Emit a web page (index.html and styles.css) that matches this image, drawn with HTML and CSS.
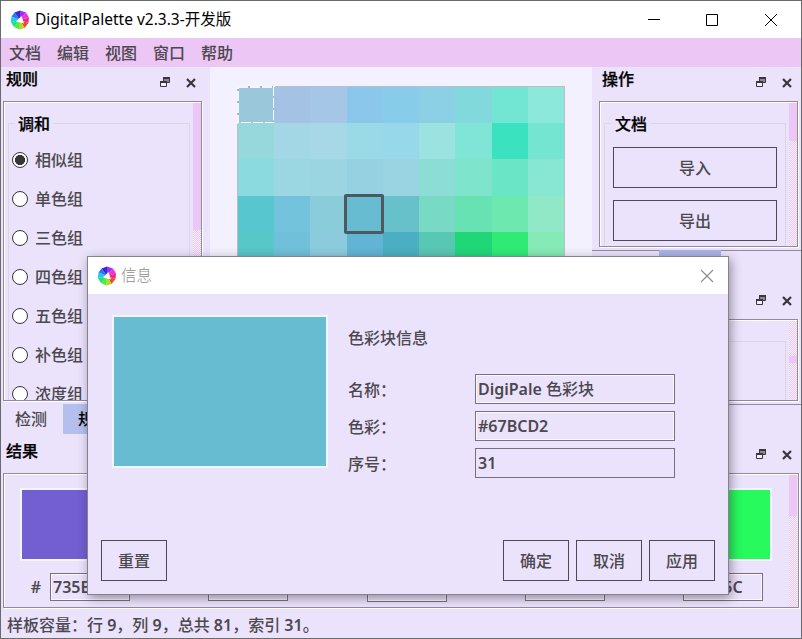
FILE: index.html
```html
<!DOCTYPE html>
<html lang="zh-CN">
<head>
<meta charset="utf-8">
<title>DigitalPalette v2.3.3</title>
<link rel="stylesheet" href="styles.css">
</head>
<body>
<svg width="0" height="0" class="defs">
  <symbol id="logo" viewBox="0 0 20 20">
    <path fill="#a030f0" d="M10 10 10 .5 16 2.500z"/>
    <path fill="#f030e0" d="M10 10 16 2.500 19 7.500z"/>
    <path fill="#f02878" d="M10 10 19 7.500 18.500 13z"/>
    <path fill="#f04830" d="M10 10 18.500 13 14.500 18z"/>
    <path fill="#b8d820" d="M10 10 14.500 18 9.500 19.500z"/>
    <path fill="#58e838" d="M10 10 9.500 19.500 4 17z"/>
    <path fill="#20e080" d="M10 10 4 17 .8 12z"/>
    <path fill="#20c8f0" d="M10 10 .8 12 1.500 6.500z"/>
    <path fill="#2878f0" d="M10 10 1.500 6.500 4.500 2.500z"/>
    <path fill="#3828d8" d="M10 10 4.500 2.500 10 .5z"/>
    <path fill="#fff" d="M11.500 6 14 13.500 6 11.500z"/>
  </symbol>
  <symbol id="float" viewBox="0 0 10 10">
    <path fill="#8d8794" stroke="#3a363e" d="M3.500 .5h6v5h-6z"/>
    <path fill="#3a363e" d="M3 0h7v2H3z"/>
    <path fill="#f2effa" stroke="#3a363e" d="M.5 4.500h6v5h-6z"/>
    <path fill="#3a363e" d="M0 4h7v2H0z"/>
  </symbol>
  <symbol id="shut" viewBox="0 0 10 10">
    <path fill="none" stroke="#39353c" stroke-width="2.200" d="M1 1l8 8M9 1l-8 8"/>
  </symbol>
</svg>
<div class="window">
  <header class="titlebar">
    <svg class="logo"><use href="#logo"/></svg>
    <span class="caption">DigitalPalette v2.3.3-开发版</span>
    <svg class="controls" width="130" height="14" viewBox="0 0 130 14" fill="none" stroke="#000">
      <path d="M0 6.500h12M58.500 1.500h11v11h-11z"/><path d="M117 1l12 12M129 1l-12 12"/>
    </svg>
  </header>
  <nav class="menubar"><span>文档</span><span>编辑</span><span>视图</span><span>窗口</span><span>帮助</span></nav>
  <main class="upper">
    <section class="left">
      <div class="dock-title"><span>规则</span><svg class="ico-float"><use href="#float"/></svg><svg class="ico-shut"><use href="#shut"/></svg></div>
      <div class="frame rules">
        <div class="group">
          <div class="legend">调和</div>
          <div class="radio on"><i></i>相似组</div>
          <div class="radio"><i></i>单色组</div>
          <div class="radio"><i></i>三色组</div>
          <div class="radio"><i></i>四色组</div>
          <div class="radio"><i></i>五色组</div>
          <div class="radio"><i></i>补色组</div>
          <div class="radio"><i></i>浓度组</div>
        </div>
        <div class="scroll"><div class="thumb thumb-rules"></div></div>
      </div>
      <div class="tabs"><span>检测</span><span class="active">规则</span></div>
    </section>
    <section class="board">
      <div class="cells">
        <i style="background:#9ac8da"><svg class="dashes" width="38" height="38" viewBox="0 0 38 38" fill="none" stroke-width="2"><path stroke="#f6f5ff" d="M0 1h38M1 0v38"/><path stroke="#9dbccb" stroke-dasharray="2 10" d="M11 1h27M1 3v35"/><path stroke="#fff" stroke-dasharray="10 2" d="M4 37h34M37 0v38"/></svg></i><i style="background:#a3c2e4"></i><i style="background:#a6c6e8"></i><i style="background:#8ac7ea"></i><i style="background:#87cdea"></i><i style="background:#8cd0e5"></i><i style="background:#81d9dc"></i><i style="background:#73e6d3"></i><i style="background:#8ce8da"></i>
        <i style="background:#97d8dc"></i><i style="background:#a4d7e6"></i><i style="background:#a6d8e7"></i><i style="background:#99dae6"></i><i style="background:#97d9ea"></i><i style="background:#9ce2e1"></i><i style="background:#80e5d7"></i><i style="background:#3ae2c0"></i><i style="background:#73e5d1"></i>
        <i style="background:#8bdadf"></i><i style="background:#9bd7e2"></i><i style="background:#9bd5e2"></i><i style="background:#95d1e1"></i><i style="background:#9ad4e2"></i><i style="background:#8bddd5"></i><i style="background:#7ee4cb"></i><i style="background:#6ae6c7"></i><i style="background:#88e7d3"></i>
        <i style="background:#57c6ce"></i><i style="background:#72c3db"></i><i style="background:#8accda"></i><i class="picked" style="background:#67bcd2"></i><i style="background:#67c1ca"></i><i style="background:#78d9c4"></i><i style="background:#67e2b2"></i><i style="background:#6de9b0"></i><i style="background:#90e8c7"></i>
        <i style="background:#59c6c8"></i><i style="background:#70c0d9"></i><i style="background:#8ccbdc"></i><i style="background:#61b4d3"></i><i style="background:#4aafc2"></i><i style="background:#58c7b3"></i><i style="background:#20d778"></i><i style="background:#30ea76"></i><i style="background:#86eab7"></i>
      </div>
    </section>
    <section class="right">
      <div class="dock-title"><span>操作</span><svg class="ico-float"><use href="#float"/></svg><svg class="ico-shut"><use href="#shut"/></svg></div>
      <div class="frame ops">
        <div class="group">
          <div class="legend">文档</div>
          <button class="wide">导入</button>
          <button class="wide">导出</button>
        </div>
        <div class="scroll"><div class="thumb thumb-ops"></div></div>
      </div>
      <div class="right-tabs"><span></span></div>
      <div class="dock-title second"><svg class="ico-float"><use href="#float"/></svg><svg class="ico-shut"><use href="#shut"/></svg></div>
      <div class="frame info">
        <div class="group"></div>
        <div class="scroll"><div class="thumb thumb-info"></div></div>
      </div>
      <div class="rule"></div>
    </section>
  </main>
  <section class="lower">
    <div class="dock-title"><span>结果</span><svg class="ico-float"><use href="#float"/></svg><svg class="ico-shut"><use href="#shut"/></svg></div>
    <div class="frame results">
      <div class="swatches">
        <div class="result"><div class="swatch" style="background:#735ed2"></div><div class="hex">#<span class="field">735ED2</span></div></div>
        <div class="result"><div class="swatch"></div><div class="hex">#<span class="field"></span></div></div>
        <div class="result"><div class="swatch"></div><div class="hex low">#<span class="field"></span></div></div>
        <div class="result"><div class="swatch"></div><div class="hex">#<span class="field"></span></div></div>
        <div class="result"><div class="swatch" style="background:#26fa5c"></div><div class="hex">#<span class="field">26FA5C</span></div></div>
      </div>
      <div class="scroll"><div class="thumb thumb-results"></div></div>
    </div>
  </section>
  <footer class="status">样板容量：行 <b>9</b>，列 <b>9</b>，总共 <b>81</b>，索引 <b>31</b>。</footer>
</div>
<div class="dialog">
  <div class="dialog-title">
    <svg class="logo"><use href="#logo"/></svg><span>信息</span>
    <svg class="dialog-x" width="14" height="14" viewBox="0 0 14 14" stroke="#8b8b8b" stroke-width="1.100"><path d="M1 1l12 12M13 1L1 13"/></svg>
  </div>
  <div class="dialog-main">
    <div class="preview"></div>
    <div class="form">
      <div class="heading">色彩块信息</div>
      <div class="row"><label>名称：</label><span class="field"><b>DigiPale</b> 色彩块</span></div>
      <div class="row"><label>色彩：</label><span class="field"><b>#67BCD2</b></span></div>
      <div class="row"><label>序号：</label><span class="field readonly"><b>31</b></span></div>
    </div>
  </div>
  <div class="actions"><button>重置</button><span class="spacer"></span><button>确定</button><button>取消</button><button>应用</button></div>
</div>
</body>
</html>
```
FILE: styles.css
```css
* { box-sizing: border-box; }
body {
  margin: 0;
  width: 802px;
  height: 639px;
  overflow: hidden;
  position: relative;
  font: 500 16px/20px "Noto Sans", "Noto Sans CJK SC", sans-serif;
  color: #4c484f;
}
b { font-weight: 600; }
.defs { position: absolute; }
svg { flex: none; display: block; }
.window {
  width: 802px;
  height: 639px;
  border: 1px solid #6a6a6c;
  background: #ebe3fb;
  display: flex;
  flex-direction: column;
}
.titlebar {
  height: 37px;
  background: #fff;
  display: flex;
  align-items: center;
  padding: 0 23px 0 9px;
  color: #000;
  font-weight: 400;
  font-size: 15.5px;
}
.logo { width: 20px; height: 20px; }
.caption { margin: -2px 0 0 5px; white-space: nowrap; }
.controls { margin-left: auto; }
.menubar {
  height: 29px;
  background: #ecc6f4;
  display: flex;
  align-items: center;
  gap: 16px;
  padding-left: 8px;
}
.upper { display: flex; height: 369px; }
.left { width: 209px; }
.board {
  width: 382px;
  background: #f4f1fe;
  padding: 19px 0 0 27px;
}
.right { width: 209px; }
.dock-title {
  height: 34px;
  padding: 2px 9px 0 5px;
  display: flex;
  color: #000;
}
.dock-title span { margin-right: auto; -webkit-text-stroke: .25px #000; }
.ico-float { width: 10px; height: 10px; margin: 8px 16px 0 0; }
.ico-shut { width: 10px; height: 10px; margin-top: 9px; }
.left .dock-title { padding-right: 14px; }
.right .dock-title { padding-left: 10px; }
.frame {
  border: 1px solid #93899c;
  box-shadow: 1px 1px #fff, inset 1px 1px #fff;
  display: flex;
  justify-content: space-between;
  overflow: hidden;
}
.scroll {
  width: 8px;
  margin-top: 1px;
  background: repeating-conic-gradient(#ecc6f3 0 25%, #f7f1fb 0 50%) 0 0 / 2px 2px;
}
.thumb { background: #ecc6f4; }
.thumb-rules { height: 127px; }
.thumb-ops { height: 38px; }
.thumb-results { height: 41px; }
.info .scroll { padding-top: 35px; }
.thumb-info { height: 7px; }
.group {
  border: 1px solid #dcd5e4;
  border-bottom: 0;
}
.legend {
  width: 38px;
  margin-top: -10px;
  background: #ebe3fb;
  color: #000;
  padding-left: 3px;
  -webkit-text-stroke: .25px #000;
}
.rules { width: 199px; height: 300px; margin-left: 2px; }
.rules .group { width: 182px; height: 400px; margin: 21px 0 0 4px; }
.rules .legend { margin-left: 6px; margin-bottom: 16px; }
.radio {
  height: 20px;
  margin: 0 0 19px 3px;
  display: flex;
  align-items: center;
  gap: 7px;
}
.radio i {
  width: 16px;
  height: 16px;
  border: 1px solid #37343a;
  border-radius: 50%;
  background: #fff;
}
.radio.on i { background: radial-gradient(circle, #37343a 0 4.800px, #fff 5.300px); }
.tabs { display: flex; margin-top: 3px; }
.tabs span { width: 62px; height: 30px; padding: 5px 0 0 14px; }
.tabs .active { background: #b4bfee; color: #000; padding-left: 15px; }
.cells {
  width: 328px;
  height: 328px;
  border: 1px solid #bdbccb;
  display: grid;
  grid-template-columns: 36px 36px 37px 36px 36px 36px 37px 36px 36px;
  grid-template-rows: 36px 36px 37px 36px 36px;
}
.cells i { position: relative; }
.dashes { position: absolute; left: -1px; top: -1px; }
.picked::after {
  content: "";
  position: absolute;
  z-index: 1;
  inset: -2px -1px -2px -3px;
  border: 3px solid #4c5a60;
  border-radius: 2px;
}
.ops { width: 199px; height: 146px; margin-left: 7px; }
.ops .group { width: 182px; margin: 21px 0 0 4px; height: 200px; }
.ops .legend { margin-left: 7px; margin-bottom: 13px; }
button {
  display: block;
  font: inherit;
  color: inherit;
  background: #ebe3fb;
  border: 1px solid #4f4755;
  width: 66px;
  height: 41px;
  padding: 0;
}
.wide { width: 164px; margin: 0 0 12px 8px; }
.right-tabs { height: 29px; margin-top: 3px; border-top: 1px solid #93899c; }
.right-tabs span { display: block; width: 62px; height: 29px; margin: -1px 0 0 67px; background: #aab5e4; }
.second { height: 40px; padding-top: 8px; justify-content: flex-end; }
.info { width: 199px; height: 82px; margin-left: 7px; }
.info .group { width: 182px; margin: 21px 0 0 4px; }
.rule { height: 1px; margin-top: 3px; background: #93899c; }
.lower { height: 172px; }
.lower .dock-title { height: 37px; padding-top: 5px; }
.results { width: 796px; height: 135px; margin-left: 2px; }
.results .scroll { margin-right: 1px; }
.swatches { display: flex; gap: 39.250px; padding: 14px 0 0 16px; }
.result { width: 119px; }
.swatch { width: 119px; height: 73px; border: 2px solid #f6f4fd; }
.hex {
  display: flex;
  align-items: center;
  justify-content: flex-end;
  gap: 9px;
  margin: 12px 9px 0 0;
  font-weight: 600;
}
.hex.low { margin-top: 13px; }
.field {
  display: block;
  height: 30px;
  width: 200px;
  padding: 4px 2px;
  border: 1px solid #77717d;
  box-shadow: inset 0 0 0 1px #faf8fe;
  white-space: nowrap;
  overflow: hidden;
}
.hex .field { width: 80px; height: 28px; padding-top: 3px; }
.field.readonly { box-shadow: none; }
.status { height: 29px; padding: 7px 0 0 6px; white-space: pre; }
.dialog {
  position: absolute;
  left: 87px;
  top: 256px;
  width: 642px;
  height: 339px;
  border: 1px solid #88828c;
  background: #ebe3fb;
  box-shadow: 2px 3px 10px rgba(40, 30, 50, .45);
  display: flex;
  flex-direction: column;
}
.dialog-title {
  height: 37px;
  background: #fff;
  display: flex;
  align-items: center;
  padding: 0 14px 0 9px;
  font-size: 15.5px;
  font-weight: 300;
  color: #8c8c8c;
}
.dialog-title span { margin: -2px 0 0 4px; }
.dialog-x { margin-left: auto; }
.dialog-main { display: flex; flex: 1; padding: 21px 0 0 24px; }
.preview {
  width: 216px;
  height: 153px;
  border: 2px solid #eff5fb;
  background: #67bcd2;
}
.form { margin: 13px 0 0 20px; }
.heading { margin-bottom: 26px; }
.row { display: flex; align-items: center; margin-bottom: 7px; }
.row label { width: 127px; padding-top: 1px; }
.actions { display: flex; gap: 7px; padding: 0 13px 13px; }
.spacer { flex: 1; }
```
